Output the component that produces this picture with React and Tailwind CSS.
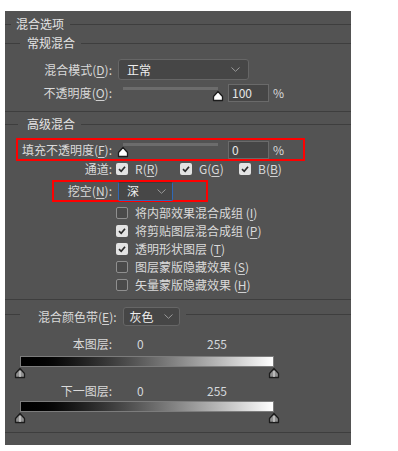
import React from 'react';

const font = { fontFamily: '"Noto Sans CJK SC", "Noto Sans", sans-serif' };

function Key({ k }) {
  return (
    <>
      (<span className="underline underline-offset-2 decoration-[#cfcfcf]">{k}</span>)
    </>
  );
}

function Chevron() {
  return (
    <svg width="9" height="5" viewBox="0 0 9 5" className="shrink-0">
      <polyline points="0.5,0.5 4.5,4.3 8.5,0.5" fill="none" stroke="#9a9a9a" strokeWidth="1" />
    </svg>
  );
}

function SliderThumb() {
  return (
    <svg width="12" height="12" viewBox="0 0 12 12">
      <path
        d="M1.5 10.5 V6.5 L6 1.5 L10.5 6.5 V10.5 Z"
        fill="#ffffff"
        stroke="#1c1c1c"
        strokeWidth="1.3"
        strokeLinejoin="round"
      />
    </svg>
  );
}

function GradThumb() {
  return (
    <svg width="12" height="12" viewBox="0 0 12 12">
      <path
        d="M1.5 10.5 V6.5 L6 1.5 L10.5 6.5 V10.5 Z"
        fill="#8e8e8e"
        stroke="#1c1c1c"
        strokeWidth="1.3"
        strokeLinejoin="round"
      />
      <line x1="6" y1="4" x2="6" y2="10" stroke="#cfcfcf" strokeWidth="1.4" />
    </svg>
  );
}

function Check({ checked }) {
  if (checked) {
    return (
      <span className="w-[12px] h-[12px] rounded-[2px] bg-[#e3e3e3] flex items-center justify-center shrink-0">
        <svg width="10" height="10" viewBox="0 0 10 10">
          <path d="M2 5.2 L4.2 7.3 L8 2.8" fill="none" stroke="#2b2b2b" strokeWidth="1.7" />
        </svg>
      </span>
    );
  }
  return <span className="w-[12px] h-[12px] rounded-[2px] bg-[#4a4a4a] border border-[#8f8f8f] shrink-0" />;
}

function Slider({ value }) {
  return (
    <div className="relative w-[107px] h-full ml-[5px] shrink-0">
      <div className="absolute left-[6px] right-[6px] top-[3px] h-[3px] bg-[#6c6c6c]" />
      <div className="absolute top-[6px]" style={{ left: value === 0 ? 0 : 95 }}>
        <SliderThumb />
      </div>
    </div>
  );
}

function NumBox({ value }) {
  return (
    <div className="ml-[4px] w-[41px] h-[18px] bg-[#464646] border border-[#6a6a6a] flex items-center pl-[3px] text-[12px] text-[#e6e6e6] shrink-0">
      {value}
    </div>
  );
}

function Header({ left, title, gap, right }) {
  return (
    <div className="flex items-center">
      <div className="h-px bg-[#3e3e3e]" style={{ width: left }} />
      <span className="text-[12px] text-[#e4e4e4] leading-none" style={{ marginLeft: gap }}>
        {title}
      </span>
      <div className="h-px bg-[#3e3e3e] flex-1" style={{ marginLeft: right }} />
    </div>
  );
}

const options = [
  { t: '将内部效果混合成组 ', k: 'I', c: false },
  { t: '将剪贴图层混合成组 ', k: 'P', c: true },
  { t: '透明形状图层 ', k: 'T', c: true },
  { t: '图层蒙版隐藏效果 ', k: 'S', c: false },
  { t: '矢量蒙版隐藏效果 ', k: 'H', c: false },
];

export default function App() {
  return (
    <div className="w-[398px] h-[451px] bg-white pt-[11px] pl-[5px]" style={font}>
      <div className="w-[346px] h-[434px] bg-[#535353] flex flex-col text-[12px] text-[#dadada]">
        {/* 混合选项 */}
        <div className="h-[26px] flex flex-col justify-center">
          <Header left={6} gap={5} title="混合选项" right={6} />
        </div>
        <div className="h-[12px] flex flex-col justify-center">
          <Header left={15} gap={7} title="常规混合" right={6} />
        </div>

        {/* blend mode */}
        <div className="mt-[10px] h-[21px] flex items-center">
          <div className="w-[107px] text-right shrink-0">混合模式<Key k="D" />:</div>
          <div className="ml-[6px] w-[131px] h-[21px] bg-[#464646] border border-[#666666] rounded-[3px] flex items-center justify-between pl-[8px] pr-[8px] text-[#eeeeee]">
            <span>正常</span>
            <Chevron />
          </div>
        </div>

        {/* opacity */}
        <div className="mt-[4px] h-[18px] flex items-center">
          <div className="w-[107px] text-right shrink-0">不透明度<Key k="O" />:</div>
          <Slider value={100} />
          <NumBox value="100" />
          <span className="ml-[4px]">%</span>
        </div>

        <div className="mt-[9px] h-px bg-[#3e3e3e]" />

        {/* 高级混合 */}
        <div className="mt-[6px] h-[12px] flex flex-col justify-center">
          <Header left={13} gap={9} title="高级混合" right={6} />
        </div>

        <div className="mt-[8px] ml-[11px] w-[289px] h-[23px] border-2 border-[#ff0000] flex items-center">
          <div className="w-[94px] text-right shrink-0">填充不透明度<Key k="F" />:</div>
          <Slider value={0} />
          <NumBox value="0" />
          <span className="ml-[4px]">%</span>
        </div>

        {/* channels */}
        <div className="mt-[1px] h-[14px] flex items-center">
          <div className="w-[107px] text-right shrink-0">通道:</div>
          <div className="ml-[4px] w-[64px] flex items-center">
            <Check checked />
            <span className="ml-[7px]">R<Key k="R" /></span>
          </div>
          <div className="w-[59px] flex items-center">
            <Check checked />
            <span className="ml-[7px]">G<Key k="G" /></span>
          </div>
          <div className="flex items-center">
            <Check checked />
            <span className="ml-[7px]">B<Key k="B" /></span>
          </div>
        </div>

        {/* knockout */}
        <div className="mt-[4px] ml-[47px] w-[156px] h-[22px] border-2 border-[#ff0000] flex items-center">
          <div className="w-[58px] text-right shrink-0">挖空<Key k="N" />:</div>
          <div className="ml-[6px] w-[55px] h-[19px] bg-[#474747] border border-[#2f68b8] border-t-[#3c3c3c] rounded-[2px] flex items-center justify-between pl-[8px] pr-[6px] text-[#eeeeee]">
            <span>深</span>
            <Chevron />
          </div>
        </div>

        <div className="mt-[2px] flex flex-col">
          {options.map((o, i) => (
            <div key={i} className="h-[18px] flex items-center pl-[111px]">
              <Check checked={o.c} />
              <span className="ml-[7px]">
                {o.t}
                <Key k={o.k} />
              </span>
            </div>
          ))}
        </div>

        <div className="mt-[5px] h-px bg-[#3e3e3e]" />

        {/* blend if */}
        <div className="mt-[7px] h-[19px] flex items-start">
          <div className="mt-[7px] w-[15px] h-px bg-[#3e3e3e] shrink-0" />
          <div className="ml-[18px] h-[19px] flex items-center shrink-0">混合颜色带<Key k="E" />:</div>
          <div className="ml-[6px] w-[57px] h-[19px] bg-[#464646] border border-[#666666] rounded-[3px] flex items-center justify-between pl-[6px] pr-[6px] text-[#eeeeee] shrink-0">
            <span>灰色</span>
            <Chevron />
          </div>
          <div className="mt-[7px] ml-[6px] flex-1 h-px bg-[#3e3e3e]" />
        </div>

        {[['本图层:', 11], ['下一图层:', 4]].map(([label, mt], i) => (
          <div key={i} className="flex flex-col" style={{ marginTop: mt }}>
            <div className="h-[14px] flex items-center">
              <div className="w-[107px] text-right shrink-0">{label}</div>
              <span className="ml-[25px] w-[70px] text-[#d4d8dc]">0</span>
              <span className="text-[#d4d8dc]">255</span>
            </div>
            <div
              className={`${i === 0 ? 'mt-[5px]' : 'mt-[3px]'} ml-[15px] w-[254px] h-[11px] border border-[#7c7c7c] bg-gradient-to-r from-black to-white`}
            />
            <div className="ml-[9px] w-[266px] h-[13px] flex justify-between items-start">
              <GradThumb />
              <GradThumb />
            </div>
          </div>
        ))}

        <div className="mt-[7px] h-px bg-[#3e3e3e]" />
      </div>
    </div>
  );
}
